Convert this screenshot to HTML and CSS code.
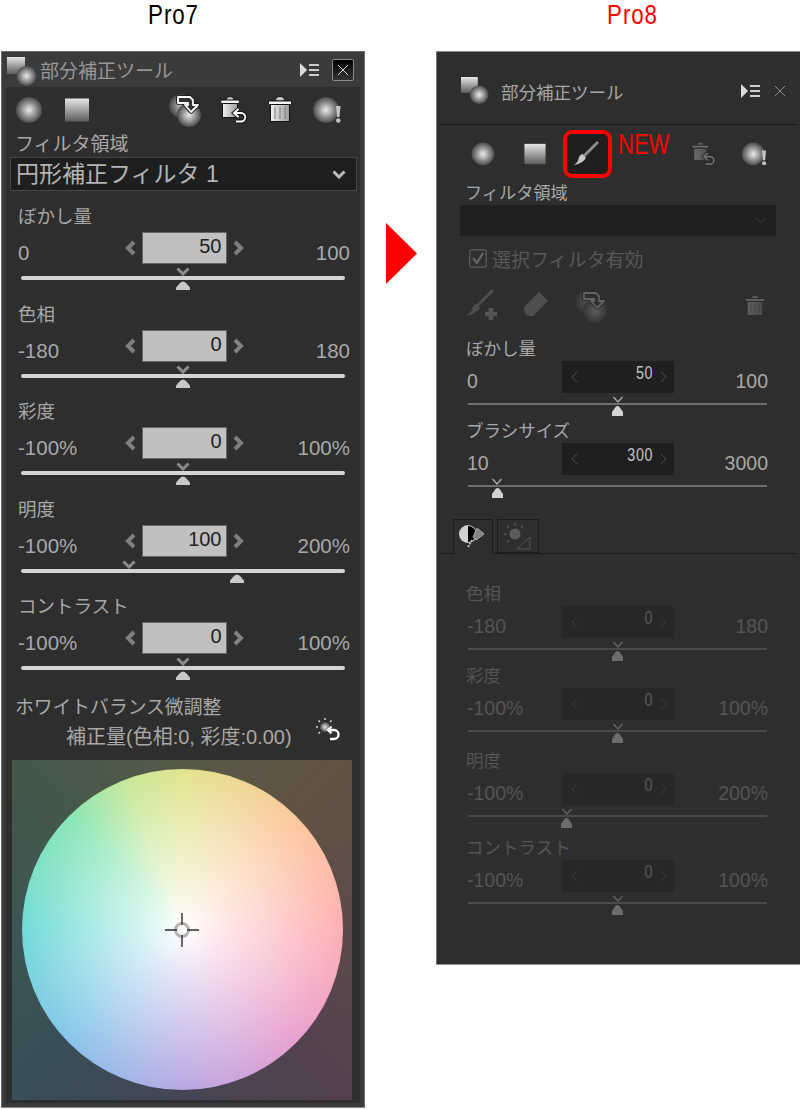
FILE: index.html
```html
<!DOCTYPE html>
<html lang="ja">
<head>
    <meta charset="UTF-8">
    <meta name="viewport" content="width=device-width, initial-scale=1.0">
    <link rel="stylesheet" href="styles.css">
    <title>部分補正ツール Pro7 / Pro8</title>
</head>
<body>
    <!-- shared icons -->
    <svg class="icon-defs" aria-hidden="true">
        <defs>
            <radialGradient id="g-ball"><stop offset="0" stop-color="#ececec"/><stop offset="1" stop-color="#4a4a4a"/></radialGradient>
            <linearGradient id="g-box" x1="0" y1="0" x2="0" y2="1"><stop offset="0" stop-color="#e6e6e6"/><stop offset="1" stop-color="#5c5c5c"/></linearGradient>
            <linearGradient id="g-bin" x1="0" y1="0" x2="1" y2="0"><stop offset="0" stop-color="#f2f2f2"/><stop offset="1" stop-color="#9a9a9a"/></linearGradient>
            <symbol id="ic-stack" viewBox="0 0 30 30">
                <rect x="0" y="0" width="18" height="17" fill="url(#g-box)"/>
                <circle cx="19.5" cy="19" r="10" fill="url(#g-ball)"/>
            </symbol>
            <symbol id="ic-circle" viewBox="0 0 34 34"><circle cx="17" cy="17" r="13" fill="url(#g-ball)"/></symbol>
            <symbol id="ic-square" viewBox="0 0 34 34"><rect x="5" y="5.5" width="24" height="23" fill="url(#g-box)"/></symbol>
            <symbol id="ic-swap" viewBox="0 0 34 34">
                <circle cx="14" cy="13" r="12" fill="url(#g-ball)" opacity=".75"/>
                <circle cx="22" cy="22" r="12" fill="url(#g-ball)"/>
                <path d="M11 4H23L26 7V12H31L24 19L18 12H21V10H11Z" fill="#333" stroke="#111" stroke-width="3.500" stroke-linejoin="round"/>
                <path d="M11 4H23L26 7V12H31L24 19L18 12H21V10H11Z" fill="#333" stroke="#fff" stroke-width="1.800" stroke-linejoin="round"/>
            </symbol>
            <symbol id="ic-trash" viewBox="0 0 34 34">
                <path d="M12.500 7.500Q12.500 3.500 17 3.500T21.500 7.500" fill="#ccc" stroke="#111"/>
                <rect x="5.500" y="8" width="23" height="3.500" rx="1" fill="#f4f4f4" stroke="#111"/>
                <rect x="7.500" y="11.500" width="19" height="17" fill="url(#g-bin)" stroke="#111"/>
                <path d="M12 14V26M17 14V26M22 14V26" stroke="#777"/>
            </symbol>
            <symbol id="ic-restore" viewBox="0 0 34 34">
                <path d="M10 7Q10 3.500 14 3.500T18 7" fill="#ccc" stroke="#111"/>
                <rect x="4.500" y="7" width="19" height="3.500" rx="1.500" fill="#f4f4f4" stroke="#111"/>
                <rect x="6.500" y="10.500" width="15" height="14" rx="1" fill="url(#g-bin)" stroke="#111"/>
                <path d="M19 20H25A4 4 0 0 1 25 28.500H20" fill="none" stroke="#111" stroke-width="4"/>
                <path d="M22.500 16L18 20L22.500 24" fill="none" stroke="#111" stroke-width="4"/>
                <path d="M19 20H25A4 4 0 0 1 25 28.500H20M22.500 16L18 20L22.500 24" fill="none" stroke="#fff" stroke-width="2"/>
            </symbol>
            <symbol id="ic-warn" viewBox="0 0 34 34">
                <circle cx="15" cy="17" r="13" fill="url(#g-ball)"/>
                <path d="M25 13H29.500L28.500 24H26Z" fill="#c4c4c4"/>
                <circle cx="27.300" cy="27.500" r="2.300" fill="#c4c4c4"/>
            </symbol>
            <symbol id="ic-brush" viewBox="0 0 30 30">
                <path d="M27 3L12 18" stroke="#8e8e8e" stroke-width="3" stroke-linecap="round"/>
                <path d="M11 15L15 19Q12 25 2 27Q7 23 7 20Q8 16 11 15Z" fill="#c8c8c8"/>
            </symbol>
            <symbol id="ic-brush-add" viewBox="0 0 34 34">
                <path d="M27 2L12 17" stroke="#4e4e4e" stroke-width="3" stroke-linecap="round"/>
                <path d="M11 15L15 19Q12 24 1 27Q7 23 7 20Q8 16 11 15Z" fill="#4e4e4e"/>
                <path d="M26 19V31M20 25H32" stroke="#555" stroke-width="4.500"/>
            </symbol>
            <symbol id="ic-eraser" viewBox="0 0 34 34">
                <path d="M20 3L29 12L15 26Q11 29 7 25Q3 21 6 17Z" fill="#4e4e4e"/>
            </symbol>
            <symbol id="ic-sun-reset" viewBox="0 0 26 26">
                <circle cx="10" cy="10" r="5" fill="url(#g-ball)"/>
                <path d="M10 1V3M1 10H3M3.500 3.500L5 5M16.500 3.500L15 5M3.500 16.500L5 15" stroke="#ddd" stroke-width="1.400"/>
                <path d="M13 13H19A4.500 4.500 0 0 1 19 22H15M16.500 9.500L13 13L16.500 16.500" fill="none" stroke="#fff" stroke-width="2.400"/>
            </symbol>
            <symbol id="ic-lines" viewBox="0 0 19 14">
                <path d="M0 0L7 7L0 14Z" fill="#ddd"/>
                <path d="M9 2H19M9 7H19M9 12H19" stroke="#ccc" stroke-width="1.800"/>
            </symbol>
            <symbol id="ic-chev-l" viewBox="0 0 12 16"><path d="M9 2L3 8L9 14" fill="none" stroke="currentColor" stroke-width="4"/></symbol>
            <symbol id="ic-chev-r" viewBox="0 0 12 16"><path d="M3 2L9 8L3 14" fill="none" stroke="currentColor" stroke-width="4"/></symbol>
            <symbol id="ic-thin-l" viewBox="0 0 12 16"><path d="M8 3L3 8L8 13" fill="none" stroke="currentColor"/></symbol>
            <symbol id="ic-thin-r" viewBox="0 0 12 16"><path d="M4 3L9 8L4 13" fill="none" stroke="currentColor"/></symbol>
            <symbol id="ic-chev-d" viewBox="0 0 14 9"><path d="M1.500 1.500L7 7L12.500 1.500" fill="none" stroke="currentColor" stroke-width="3"/></symbol>
            <symbol id="ic-thin-d" viewBox="0 0 12 8"><path d="M1.500 1L6 6L10.500 1" fill="none" stroke="currentColor" stroke-width="1.200"/></symbol>
            <symbol id="ic-thumb" viewBox="0 0 14 9"><path d="M0 9V6.500L4 2Q7 -1 10 2L14 6.500V9Z" fill="currentColor"/></symbol>
            <symbol id="ic-thumb-new" viewBox="0 0 11 11"><path d="M0 11V7L3.500 2Q5.500 0 7.500 2L11 7V11Z" fill="currentColor"/></symbol>
        </defs>
    </svg>

    <div class="page">
        <!-- Pro7 -->
        <div class="col-old">
            <div class="ver ver-old"><span class="ver-text">Pro7</span></div>
            <div class="panel-old">
                <div class="old-title">
                    <svg class="old-title-icon"><use href="#ic-stack"/></svg>
                    <span class="old-title-text">部分補正ツール</span>
                    <svg class="lines"><use href="#ic-lines"/></svg>
                    <div class="old-close"><svg width="12" height="12"><path d="M1 1L11 11M11 1L1 11" stroke="#ddd"/></svg></div>
                </div>
                <div class="old-body">
                    <div class="old-tools">
                        <svg class="tool"><use href="#ic-circle"/></svg>
                        <svg class="tool"><use href="#ic-square"/></svg>
                        <svg class="tool"><use href="#ic-swap"/></svg>
                        <svg class="tool"><use href="#ic-restore"/></svg>
                        <svg class="tool"><use href="#ic-trash"/></svg>
                        <svg class="tool"><use href="#ic-warn"/></svg>
                    </div>
                    <div class="old-area">フィルタ領域</div>
                    <div class="old-select">
                        <span class="old-select-text">円形補正フィルタ 1</span>
                        <svg class="old-select-arrow"><use href="#ic-chev-d"/></svg>
                    </div>

                    <div class="old-sliders">
                        <div class="old-sec">
                            <div class="old-label">ぼかし量</div>
                            <div class="old-row">
                                <span class="old-end">0</span>
                                <div class="old-spin">
                                    <svg class="old-arrow"><use href="#ic-chev-l"/></svg>
                                    <div class="old-value">50</div>
                                    <svg class="old-arrow"><use href="#ic-chev-r"/></svg>
                                </div>
                                <span class="old-end end-r">100</span>
                            </div>
                            <div class="old-track">
                                <svg class="mark-top" style="left: 50%"><use href="#ic-chev-d"/></svg>
                                <svg class="mark-bot" style="left: 50%"><use href="#ic-thumb"/></svg>
                            </div>
                        </div>
                        <div class="old-sec">
                            <div class="old-label">色相</div>
                            <div class="old-row">
                                <span class="old-end">-180</span>
                                <div class="old-spin">
                                    <svg class="old-arrow"><use href="#ic-chev-l"/></svg>
                                    <div class="old-value">0</div>
                                    <svg class="old-arrow"><use href="#ic-chev-r"/></svg>
                                </div>
                                <span class="old-end end-r">180</span>
                            </div>
                            <div class="old-track">
                                <svg class="mark-top" style="left: 50%"><use href="#ic-chev-d"/></svg>
                                <svg class="mark-bot" style="left: 50%"><use href="#ic-thumb"/></svg>
                            </div>
                        </div>
                        <div class="old-sec">
                            <div class="old-label">彩度</div>
                            <div class="old-row">
                                <span class="old-end">-100%</span>
                                <div class="old-spin">
                                    <svg class="old-arrow"><use href="#ic-chev-l"/></svg>
                                    <div class="old-value">0</div>
                                    <svg class="old-arrow"><use href="#ic-chev-r"/></svg>
                                </div>
                                <span class="old-end end-r">100%</span>
                            </div>
                            <div class="old-track">
                                <svg class="mark-top" style="left: 50%"><use href="#ic-chev-d"/></svg>
                                <svg class="mark-bot" style="left: 50%"><use href="#ic-thumb"/></svg>
                            </div>
                        </div>
                        <div class="old-sec">
                            <div class="old-label">明度</div>
                            <div class="old-row">
                                <span class="old-end">-100%</span>
                                <div class="old-spin">
                                    <svg class="old-arrow"><use href="#ic-chev-l"/></svg>
                                    <div class="old-value">100</div>
                                    <svg class="old-arrow"><use href="#ic-chev-r"/></svg>
                                </div>
                                <span class="old-end end-r">200%</span>
                            </div>
                            <div class="old-track">
                                <svg class="mark-top" style="left: 33.3%"><use href="#ic-chev-d"/></svg>
                                <svg class="mark-bot" style="left: 66.7%"><use href="#ic-thumb"/></svg>
                            </div>
                        </div>
                        <div class="old-sec">
                            <div class="old-label">コントラスト</div>
                            <div class="old-row">
                                <span class="old-end">-100%</span>
                                <div class="old-spin">
                                    <svg class="old-arrow"><use href="#ic-chev-l"/></svg>
                                    <div class="old-value">0</div>
                                    <svg class="old-arrow"><use href="#ic-chev-r"/></svg>
                                </div>
                                <span class="old-end end-r">100%</span>
                            </div>
                            <div class="old-track">
                                <svg class="mark-top" style="left: 50%"><use href="#ic-chev-d"/></svg>
                                <svg class="mark-bot" style="left: 50%"><use href="#ic-thumb"/></svg>
                            </div>
                        </div>
                    </div>

                    <div class="wb-label">ホワイトバランス微調整</div>
                    <div class="wb-sub">
                        <span class="wb-amount">補正量(色相:0, 彩度:0.00)</span>
                        <svg class="wb-reset"><use href="#ic-sun-reset"/></svg>
                    </div>
                    <div class="wheel-box">
                        <div class="wheel">
                            <svg class="cross" viewBox="0 0 34 34">
                                <circle cx="17" cy="17" r="6.500" fill="none" stroke="#b4b4b4" stroke-width="3"/>
                                <path d="M17 0V12M17 22V34M0 17H12M22 17H34" stroke="#2c2c2c" stroke-width="1.400"/>
                            </svg>
                        </div>
                    </div>
                </div>
            </div>
        </div>

        <div class="arrow-col">
            <svg class="big-arrow" viewBox="0 0 31 61"><path d="M0 0L31 30.500L0 61Z" fill="#ff0000"/></svg>
        </div>

        <!-- Pro8 -->
        <div class="col-new">
            <div class="ver ver-new"><span class="ver-text">Pro8</span></div>
            <div class="panel-new">
                <div class="new-title">
                    <svg class="new-title-icon"><use href="#ic-stack"/></svg>
                    <span class="new-title-text">部分補正ツール</span>
                    <svg class="lines"><use href="#ic-lines"/></svg>
                    <svg class="new-close" width="12" height="12"><path d="M1 1L11 11M11 1L1 11" stroke="#8c8c8c"/></svg>
                </div>
                <div class="new-tools">
                    <svg class="tool-new"><use href="#ic-circle"/></svg>
                    <svg class="tool-new"><use href="#ic-square"/></svg>
                    <div class="tool-active"><svg class="brush"><use href="#ic-brush"/></svg></div>
                    <span class="tag-new">NEW</span>
                    <svg class="tool-new tool-dim"><use href="#ic-restore"/></svg>
                    <svg class="tool-new"><use href="#ic-warn"/></svg>
                </div>
                <div class="new-area">フィルタ領域</div>
                <div class="new-select"><svg class="new-select-arrow"><use href="#ic-thin-d"/></svg></div>
                <div class="new-check">
                    <svg class="check-box" viewBox="0 0 18 19">
                        <rect x="0.750" y="0.750" width="16.500" height="17.500" rx="2" fill="none" stroke="#555" stroke-width="1.500"/>
                        <path d="M4 9L8 14L14 4" fill="none" stroke="#666" stroke-width="2.200"/>
                    </svg>
                    <span>選択フィルタ有効</span>
                </div>
                <div class="new-actions">
                    <svg class="act"><use href="#ic-brush-add"/></svg>
                    <svg class="act"><use href="#ic-eraser"/></svg>
                    <svg class="act act-dim"><use href="#ic-swap"/></svg>
                    <svg class="act act-dim act-last"><use href="#ic-trash"/></svg>
                </div>

                <div class="new-sec sec-blur">
                    <div class="new-label">ぼかし量</div>
                    <div class="new-row">
                        <span class="new-end">0</span>
                        <div class="new-spin">
                            <svg class="new-arrow"><use href="#ic-thin-l"/></svg>
                            <div class="new-value">50</div>
                            <svg class="new-arrow"><use href="#ic-thin-r"/></svg>
                        </div>
                        <span class="new-end end-r">100</span>
                    </div>
                    <div class="new-track">
                        <svg class="mark-top-new" style="left: 50%"><use href="#ic-thin-d"/></svg>
                        <svg class="mark-bot-new" style="left: 50%"><use href="#ic-thumb-new"/></svg>
                    </div>
                </div>
                <div class="new-sec sec-size">
                    <div class="new-label">ブラシサイズ</div>
                    <div class="new-row">
                        <span class="new-end">10</span>
                        <div class="new-spin">
                            <svg class="new-arrow"><use href="#ic-thin-l"/></svg>
                            <div class="new-value">300</div>
                            <svg class="new-arrow"><use href="#ic-thin-r"/></svg>
                        </div>
                        <span class="new-end end-r">3000</span>
                    </div>
                    <div class="new-track">
                        <svg class="mark-top-new" style="left: 9.7%"><use href="#ic-thin-d"/></svg>
                        <svg class="mark-bot-new" style="left: 9.7%"><use href="#ic-thumb-new"/></svg>
                    </div>
                </div>

                <div class="tabs">
                    <div class="tab tab-on">
                        <svg width="32" height="28" viewBox="0 0 32 28">
                            <circle cx="11" cy="11" r="9" fill="#d0d0d0"/>
                            <path d="M11 3A8 8 0 0 1 11 19Z" fill="#000"/>
                            <path d="M20 5L27 11L19 17L16 14Z" fill="#858585" stroke="#aaa"/>
                            <path d="M15 17L11 24" stroke="#bbb" stroke-width="2" stroke-dasharray="2 1"/>
                        </svg>
                    </div>
                    <div class="tab">
                        <svg width="32" height="28" viewBox="0 0 32 28">
                            <circle cx="13" cy="12" r="5.500" fill="#5c5c5c"/>
                            <path d="M13 1V4M2 12H5M5 4L7 6M21 4L19 6M5 20L7 18" stroke="#555" stroke-width="1.400"/>
                            <path d="M28 15V27H15Z" fill="#2e2e2e" stroke="#555"/>
                        </svg>
                    </div>
                </div>

                <div class="new-sec is-off sec-a">
                    <div class="new-label">色相</div>
                    <div class="new-row">
                        <span class="new-end">-180</span>
                        <div class="new-spin">
                            <svg class="new-arrow"><use href="#ic-thin-l"/></svg>
                            <div class="new-value">0</div>
                            <svg class="new-arrow"><use href="#ic-thin-r"/></svg>
                        </div>
                        <span class="new-end end-r">180</span>
                    </div>
                    <div class="new-track">
                        <svg class="mark-top-new" style="left: 50%"><use href="#ic-thin-d"/></svg>
                        <svg class="mark-bot-new" style="left: 50%"><use href="#ic-thumb-new"/></svg>
                    </div>
                </div>
                <div class="new-sec is-off sec-b">
                    <div class="new-label">彩度</div>
                    <div class="new-row">
                        <span class="new-end">-100%</span>
                        <div class="new-spin">
                            <svg class="new-arrow"><use href="#ic-thin-l"/></svg>
                            <div class="new-value">0</div>
                            <svg class="new-arrow"><use href="#ic-thin-r"/></svg>
                        </div>
                        <span class="new-end end-r">100%</span>
                    </div>
                    <div class="new-track">
                        <svg class="mark-top-new" style="left: 50%"><use href="#ic-thin-d"/></svg>
                        <svg class="mark-bot-new" style="left: 50%"><use href="#ic-thumb-new"/></svg>
                    </div>
                </div>
                <div class="new-sec is-off sec-c">
                    <div class="new-label">明度</div>
                    <div class="new-row">
                        <span class="new-end">-100%</span>
                        <div class="new-spin">
                            <svg class="new-arrow"><use href="#ic-thin-l"/></svg>
                            <div class="new-value">0</div>
                            <svg class="new-arrow"><use href="#ic-thin-r"/></svg>
                        </div>
                        <span class="new-end end-r">200%</span>
                    </div>
                    <div class="new-track">
                        <svg class="mark-top-new" style="left: 33%"><use href="#ic-thin-d"/></svg>
                        <svg class="mark-bot-new" style="left: 33%"><use href="#ic-thumb-new"/></svg>
                    </div>
                </div>
                <div class="new-sec is-off">
                    <div class="new-label">コントラスト</div>
                    <div class="new-row">
                        <span class="new-end">-100%</span>
                        <div class="new-spin">
                            <svg class="new-arrow"><use href="#ic-thin-l"/></svg>
                            <div class="new-value">0</div>
                            <svg class="new-arrow"><use href="#ic-thin-r"/></svg>
                        </div>
                        <span class="new-end end-r">100%</span>
                    </div>
                    <div class="new-track">
                        <svg class="mark-top-new" style="left: 50%"><use href="#ic-thin-d"/></svg>
                        <svg class="mark-bot-new" style="left: 50%"><use href="#ic-thumb-new"/></svg>
                    </div>
                </div>
            </div>
        </div>
    </div>
</body>
</html>
```

FILE: styles.css
```css
/* Global */
body {
    margin: 0;
    background-color: #fff;
    font-family: "Liberation Sans", "Noto Sans CJK JP", sans-serif;
}

.icon-defs {
    position: absolute;
    width: 0;
    height: 0;
}

.page {
    display: flex;
    width: 800px;
    height: 1110px;
    overflow: hidden;
    padding-left: 1px;
    box-sizing: border-box;
}

svg {
    display: block;
    flex: none;
}

/* Column headings */
.ver {
    height: 51px;
    box-sizing: border-box;
    text-align: center;
}

.ver-text {
    display: inline-block;
    font-size: 26px;
    line-height: 30px;
    letter-spacing: 1px;
    transform: scale(0.86, 1.05);
}

.ver-old {
    color: #000;
    padding-right: 19px;
}

.ver-new {
    color: #f00;
    padding-left: 29px;
}

.col-old {
    width: 364px;
    flex: none;
}

.col-new {
    width: 364px;
    flex: none;
}

.arrow-col {
    width: 71px;
    flex: none;
    padding: 223px 0 0 21px;
    box-sizing: border-box;
}

.big-arrow {
    width: 31px;
    height: 61px;
}

/* Pro7 panel */
.panel-old {
    height: 1057px;
    box-sizing: border-box;
    padding: 0 4px 5px;
    background-color: #3b3b3b;
    border: 1px solid #6c6c6c;
    border-bottom-color: #8a8a8a;
}

.old-title {
    display: flex;
    align-items: center;
    height: 35px;
    position: relative;
}

.old-title-icon {
    width: 30px;
    height: 30px;
    margin: 4px 0 0 1px;
    position: relative;
    z-index: 1;
}

.old-title-text {
    margin-left: 3px;
    width: 260px;
    font-size: 19px;
    color: #989898;
}

.lines {
    width: 19px;
    height: 14px;
}

.old-close {
    display: flex;
    align-items: center;
    justify-content: center;
    width: 20px;
    height: 20px;
    margin-left: 13px;
    border: 1px solid #8a8a8a;
    border-radius: 2px;
    background: linear-gradient(#000, #333);
}

.old-body {
    height: 1016px;
    background-color: #2e2e2e;
    box-sizing: border-box;
}

.old-tools {
    display: grid;
    grid-template-columns: 48px 107px 49px 47px 48px 34px;
    padding: 6px 0 0 6px;
    height: 46px;
    box-sizing: border-box;
}

.tool {
    width: 34px;
    height: 34px;
}

.old-area {
    margin: 2px 0 0 9px;
    font-size: 19px;
    line-height: 20px;
    color: #a8a8a8;
}

.old-select {
    display: flex;
    align-items: center;
    justify-content: space-between;
    height: 34px;
    margin: 2px 3px 0 4px;
    padding: 0 10px 0 5px;
    box-sizing: border-box;
    background-color: #1e1e1e;
    border: 1px solid #464646;
    font-size: 23px;
    color: #b4b4b4;
}

.old-select-text {
    padding-bottom: 4px;
}

.old-select-arrow {
    width: 14px;
    height: 9px;
    color: #bbb;
}

.old-sliders {
    margin-top: 16px;
}

.old-sec {
    height: 97.600px;
    padding: 0 10px 0 12px;
    box-sizing: border-box;
}

.old-label {
    font-size: 18.500px;
    line-height: 20px;
    color: #a8a8a8;
}

.old-row {
    display: grid;
    grid-template-columns: 1fr auto 1fr;
    margin-top: 5px;
    height: 32px;
}

.old-end {
    padding-top: 9px;
    font-size: 20.500px;
    line-height: 24px;
    color: #a8a8a8;
}

.end-r {
    text-align: right;
}

.old-spin {
    display: flex;
    align-items: flex-start;
    gap: 5px;
}

.old-arrow {
    width: 12px;
    height: 16px;
    margin-top: 8px;
    color: #808080;
}

.old-value {
    width: 85px;
    height: 32px;
    padding-right: 4px;
    box-sizing: border-box;
    background-color: #c0c0c0;
    border: 1px solid #666;
    text-align: right;
    font-size: 20px;
    line-height: 26px;
    color: #222;
}

.old-track {
    position: relative;
    height: 4px;
    margin: 12px 0 0 3px;
    width: 324px;
    border-radius: 2px;
    background-color: #d4d4d4;
}

.mark-top,
.mark-bot {
    position: absolute;
    width: 14px;
    height: 9px;
    margin-left: -7px;
}

.mark-top {
    top: -9px;
    color: #8c8c8c;
}

.mark-bot {
    top: 5px;
    color: #c8c8c8;
}

/* White balance */
.wb-label {
    margin: 3px 0 0 9px;
    font-size: 18.800px;
    line-height: 20px;
    color: #a8a8a8;
}

.wb-sub {
    display: flex;
    align-items: flex-start;
    margin-top: 9px;
    height: 33px;
    padding-left: 60px;
    font-size: 20px;
    line-height: 20px;
    color: #a8a8a8;
}

.wb-amount {
    width: 228px;
    white-space: nowrap;
}

.wb-reset {
    width: 26px;
    height: 26px;
    margin: -10px 0 0 21px;
}

.wheel-box {
    display: flex;
    align-items: center;
    justify-content: center;
    width: 340px;
    height: 340px;
    margin-left: 6px;
    background: conic-gradient(#565a48, #625243 45deg, #5b4a4a 90deg, #54414f 135deg, #464656 180deg, #384e58 225deg, #3e5654 270deg, #44584a 315deg, #565a48);
}

.wheel {
    display: flex;
    align-items: center;
    justify-content: center;
    width: 321px;
    height: 321px;
    border-radius: 50%;
    background:
        radial-gradient(circle closest-side, #fff 0%, rgba(255, 255, 255, 0.7) 25%, rgba(255, 255, 255, 0) 100%),
        conic-gradient(#e2e48e, #fcc89c 45deg, #ffb0b4 90deg, #e8a0d0 135deg, #b8a8e4 180deg, #88c4ea 225deg, #70dcd8 270deg, #88e6b4 315deg, #c8e898 340deg, #e2e48e);
}

.cross {
    width: 34px;
    height: 34px;
}

/* Pro8 panel */
.panel-new {
    height: 914px;
    box-sizing: border-box;
    background-color: #2e2e2e;
    border-top: 1px solid #8a8a8a;
    border-left: 1px solid #777;
    border-bottom: 1px solid #999;
}

.new-title {
    display: flex;
    align-items: center;
    height: 66px;
    padding-top: 6px;
    margin: 0 4px;
    border-bottom: 1px solid #191919;
}

.new-title-icon {
    width: 28px;
    height: 28px;
    margin-left: 20px;
}

.new-title-text {
    width: 240px;
    margin-left: 12px;
    font-size: 17.500px;
    color: #a8a8a8;
}

.new-close {
    margin-left: 14px;
}

.new-tools {
    display: flex;
    align-items: center;
    height: 48px;
    margin-top: 5px;
    padding-left: 31px;
    position: relative;
}

.tool-new {
    width: 30px;
    height: 30px;
    margin-right: 22px;
}

.tool-dim {
    opacity: 0.3;
}

.tool-active {
    display: flex;
    align-items: center;
    justify-content: center;
    width: 49px;
    height: 48px;
    margin-left: -9px;
    box-sizing: border-box;
    background-color: #1f1f1f;
    border: 4px solid #f00;
    border-radius: 9px;
}

.brush {
    width: 28px;
    height: 28px;
    margin-right: 4px;
}

.tag-new {
    align-self: flex-start;
    width: 70px;
    margin-left: 6px;
    font-size: 29px;
    line-height: 28px;
    color: #f00;
    transform: scaleX(0.76);
    transform-origin: left;
}

.new-area {
    margin: 5px 0 0 28px;
    font-size: 17.200px;
    line-height: 20px;
    color: #a8a8a8;
}

.new-select {
    display: flex;
    align-items: center;
    justify-content: flex-end;
    height: 31px;
    margin: 2px 24px 0 23px;
    padding-right: 9px;
    background-color: #202020;
}

.new-select-arrow {
    width: 12px;
    height: 8px;
    color: #333;
}

.new-check {
    display: flex;
    align-items: center;
    gap: 5px;
    height: 20px;
    margin: 12px 0 0 32px;
    font-size: 19px;
    color: #585858;
}

.check-box {
    width: 18px;
    height: 19px;
}

.new-actions {
    display: flex;
    height: 34px;
    margin-top: 21px;
    padding-left: 28px;
}

.act {
    width: 34px;
    height: 34px;
    margin-right: 20px;
}

.act-dim {
    opacity: 0.25;
}

.act-last {
    width: 28px;
    height: 28px;
    margin: 3px 0 0 114px;
}

/* Pro8 sliders */
.new-sec {
    height: 82px;
    margin-left: 30px;
    width: 301px;
    box-sizing: border-box;
}

.sec-blur {
    margin-top: 14px;
}

.sec-size {
    height: 100px;
}

.sec-b {
    height: 85px;
}

.sec-c {
    height: 87px;
}

.sec-a {
    margin-top: 28px;
}

.new-label {
    height: 24px;
    font-size: 17.500px;
    line-height: 24px;
    margin-left: -1px;
    color: #a8a8a8;
}

.new-row {
    display: grid;
    grid-template-columns: 1fr 112px 1fr;
    height: 30px;
}

.new-end {
    padding-top: 8px;
    font-size: 19.500px;
    line-height: 24px;
    color: #a8a8a8;
}

.new-spin {
    display: flex;
    align-items: center;
    justify-content: space-between;
    padding: 0 5px 0 7px;
    background-color: #1f1f1f;
}

.new-arrow {
    width: 12px;
    height: 16px;
    color: #4c4c4c;
}

.new-value {
    flex: 1;
    padding-right: 5px;
    text-align: right;
    font-size: 19px;
    letter-spacing: 1px;
    line-height: 24px;
    margin-top: -8px;
    color: #c4c4c4;
    transform: scaleX(0.75);
    transform-origin: right;
}

.new-track {
    position: relative;
    width: 299px;
    height: 2px;
    margin: 12px 0 0 1px;
    background-color: #6e6e6e;
}

.mark-top-new,
.mark-bot-new {
    position: absolute;
}

.mark-top-new {
    top: -7px;
    width: 12px;
    height: 8px;
    margin-left: -6px;
    color: #b0b0b0;
}

.mark-bot-new {
    top: 2px;
    width: 11px;
    height: 11px;
    margin-left: -5.500px;
    color: #d2d2d2;
}

/* Tabs */
.tabs {
    display: flex;
    gap: 4px;
    height: 34px;
    margin: 0 4px;
    padding-left: 12px;
    border-bottom: 1px solid #1c1c1c;
}

.tab {
    display: flex;
    align-items: center;
    justify-content: center;
    width: 42px;
    height: 34px;
    box-sizing: border-box;
    border: 1px solid #1c1c1c;
}

.tab-on {
    width: 40px;
    height: 35px;
    background-color: #2e2e2e;
    border-bottom: 0;
}

/* disabled state */
.is-off .new-label,
.is-off .new-end {
    color: #545454;
}

.is-off .new-spin {
    background-color: #272727;
}

.is-off .new-arrow {
    color: #3c3c3c;
}

.is-off .new-value {
    color: #5a5a5a;
}

.is-off .new-track {
    background-color: #4a4a4a;
}

.is-off .mark-top-new {
    color: #666;
}

.is-off .mark-bot-new {
    color: #6c6c6c;
}
```
